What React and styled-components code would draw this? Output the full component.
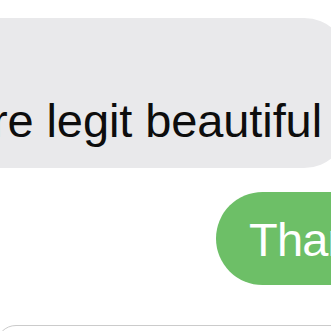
import React from "react"
import styled, { createGlobalStyle } from "styled-components"

const GlobalStyle = createGlobalStyle`
  html, body {
    margin: 0;
    padding: 0;
    background: #ffffff;
    overflow: hidden;
  }
  body {
    font-family: "Liberation Sans", Arial, sans-serif;
  }
`

const Screen = styled.div`
  width: 331px;
  height: 331px;
  overflow: hidden;
  box-sizing: border-box;
  padding-top: 18px;
  display: flex;
  flex-direction: column;
`

const Row = styled.div`
  display: flex;
  justify-content: ${props => (props.$mine ? "flex-start" : "flex-end")};
  padding-left: ${props => (props.$mine ? "216px" : "0")};
  margin-top: ${props => props.$gap || 0}px;
`

const Bubble = styled.div`
  flex-shrink: 0;
  white-space: nowrap;
  font-size: 47px;
  line-height: 56px;
  letter-spacing: ${props => (props.$mine ? "-0.8px" : "-0.1px")};
  background: ${props => (props.$mine ? "#6dbf67" : "#e9e9eb")};
  color: ${props => (props.$mine ? "#ffffff" : "#0d0d0d")};
  padding: ${props => (props.$mine ? "20px 34px 17px 33px" : "19px 26px 19px 30px")};
  border-radius: ${props => (props.$mine ? "47px" : "44px")};
  margin-right: ${props => (props.$mine ? "0" : "-17px")};
`

const Composer = styled.div`
  flex-shrink: 0;
  margin-top: 40px;
  margin-left: -4px;
  margin-right: -20px;
  height: 44px;
  border: 1.5px solid #cbcbcb;
  border-radius: 20px;
`

const App = () => {
  return (
    <Screen>
      <GlobalStyle />
      <Row>
        <Bubble>
          Wow
          <br />
          your photos are legit beautiful
        </Bubble>
      </Row>
      <Row $mine $gap={24}>
        <Bubble $mine>Thanks so much</Bubble>
      </Row>
      <Composer />
    </Screen>
  )
}

export default App
